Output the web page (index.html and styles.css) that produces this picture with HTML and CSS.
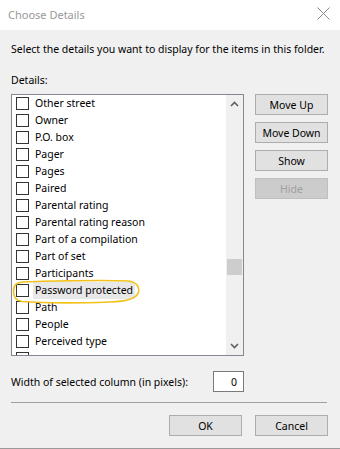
FILE: index.html
```html
<!DOCTYPE html>
<html lang="en">
<head>
  <meta charset="UTF-8" />
  <title>Choose Details</title>
  <link rel="stylesheet" href="styles.css">
</head>
<body>
  <div class="dialog">
    <div class="titlebar">
      <span class="title">Choose Details</span>
      <svg class="close" width="13" height="13" viewBox="0 0 13 13">
        <path d="M0.5 0.5 L12.5 12.5 M12.5 0.5 L0.5 12.5" stroke="#8a8a8a" stroke-width="1" fill="none" />
      </svg>
    </div>

    <div class="content">
      <p class="intro">Select the details you want to display for the items in this folder.</p>
      <div class="label">Details:</div>

      <div class="main">
        <div class="listbox">
          <ul class="items">
            <li><span class="check"></span><span class="name">Other street</span></li>
            <li><span class="check"></span><span class="name">Owner</span></li>
            <li><span class="check"></span><span class="name">P.O. box</span></li>
            <li><span class="check"></span><span class="name">Pager</span></li>
            <li><span class="check"></span><span class="name">Pages</span></li>
            <li><span class="check"></span><span class="name">Paired</span></li>
            <li><span class="check"></span><span class="name">Parental rating</span></li>
            <li><span class="check"></span><span class="name">Parental rating reason</span></li>
            <li><span class="check"></span><span class="name">Part of a compilation</span></li>
            <li><span class="check"></span><span class="name">Part of set</span></li>
            <li><span class="check"></span><span class="name">Participants</span></li>
            <li class="selected"><span class="check"></span><span class="name">Password protected</span></li>
            <li><span class="check"></span><span class="name">Path</span></li>
            <li><span class="check"></span><span class="name">People</span></li>
            <li><span class="check"></span><span class="name">Perceived type</span></li>
            <li><span class="check"></span></li>
          </ul>
          <div class="scrollbar">
            <svg class="arrow" width="9" height="6" viewBox="0 0 9 6">
              <path d="M1 5 L4.5 1.5 L8 5" stroke="#606060" stroke-width="1.6" fill="none" />
            </svg>
            <div class="track">
              <div class="thumb"></div>
            </div>
            <svg class="arrow" width="9" height="6" viewBox="0 0 9 6">
              <path d="M1 1 L4.5 4.5 L8 1" stroke="#606060" stroke-width="1.6" fill="none" />
            </svg>
          </div>
          <!-- yellow marker drawn round one row -->
          <svg class="marker" width="130" height="26" viewBox="0 0 130 26">
            <path d="M22 2.5 C60 1.5 98 1 116 2 C125 3 127.5 8 126.5 13 C125 19 116 22.5 98 23 C70 24 30 24 10 22.5 C3 21.5 1.5 17 1.5 12 C1.5 6 4 3.5 12 3 C20 2.5 40 2 60 1.8"
              stroke="#f2c21b" stroke-width="1.6" fill="none" stroke-linecap="round" />
          </svg>
        </div>

        <div class="actions">
          <button class="btn">Move Up</button>
          <button class="btn">Move Down</button>
          <button class="btn">Show</button>
          <button class="btn" disabled>Hide</button>
        </div>
      </div>

      <div class="width-row">
        <span>Width of selected column (in pixels):</span>
        <input class="width-input" type="text" value="0" />
      </div>

      <hr class="separator" />

      <div class="footer">
        <button class="btn">OK</button>
        <button class="btn">Cancel</button>
      </div>
    </div>
  </div>
</body>
</html>
```

FILE: styles.css
```css
body {
  margin: 0;
  font-family: 'Noto Sans', 'Open Sans', sans-serif;
  font-size: 10.5px;
  color: #000;
  background-color: #f0f0f0;
}

.dialog {
  width: 340px;
  height: 449px;
  box-sizing: border-box;
  border-bottom: 1px solid #9a9a9a;
  background-color: #f0f0f0;
}

.titlebar {
  height: 30px;
  background-color: white;
  display: flex;
  align-items: center;
  justify-content: space-between;
  padding: 0 10px 0 8px;
}

.title {
  color: #999;
  font-size: 11px;
  margin-top: -1px;
}

.close {
  margin-top: -3px;
}

.content {
  padding: 0 11px;
}

.intro {
  margin: 0;
  padding-top: 11px;
  line-height: 16px;
  white-space: nowrap;
}

.label {
  margin-top: 15px;
  line-height: 16px;
}

.main {
  display: flex;
  gap: 11px;
  margin-top: 6px;
}

.listbox {
  position: relative;
  width: 233px;
  height: 262px;
  box-sizing: border-box;
  border: 1px solid #828790;
  background-color: white;
  display: flex;
  overflow: hidden;
}

.items {
  list-style: none;
  margin: 0;
  padding: 0 0 0 4px;
  flex: 1;
}

.items li {
  height: 17px;
  display: flex;
  align-items: center;
}

.check {
  width: 11px;
  height: 11px;
  border: 1px solid #333;
  flex-shrink: 0;
}

.name {
  margin-left: 4px;
  padding: 0 2px;
  line-height: 17px;
}

.selected .name {
  background-color: #e8e8e8;
}

.scrollbar {
  width: 17px;
  background-color: #f0f0f0;
  display: flex;
  flex-direction: column;
  align-items: center;
}

.arrow {
  margin: 6px 0;
}

.track {
  flex: 1;
  width: 100%;
  padding-top: 146px;
}

.thumb {
  width: 15px;
  height: 16px;
  margin-left: 1px;
  background-color: #cdcdcd;
}

.marker {
  position: absolute;
  left: 0;
  top: 184px;
}

.actions {
  display: flex;
  flex-direction: column;
  gap: 7px;
}

.btn {
  width: 73px;
  height: 21px;
  padding: 0;
  font-family: inherit;
  font-size: 10.5px;
  color: #000;
  background-color: #e1e1e1;
  border: 1px solid #adadad;
}

.btn:disabled {
  color: #a0a0a0;
  background-color: #cccccc;
  border-color: #bfbfbf;
}

.width-row {
  display: flex;
  align-items: center;
  justify-content: space-between;
  width: 233px;
  margin-top: 15px;
  white-space: nowrap;
}

.width-input {
  width: 31px;
  height: 21px;
  box-sizing: border-box;
  border: 1px solid #7a7a7a;
  padding: 0 6px 0 0;
  font-family: inherit;
  font-size: 10.5px;
  text-align: right;
}

.separator {
  margin: 10px 0 0 0;
  width: 316px;
  border: none;
  border-top: 1px solid #a0a0a0;
}

.footer {
  display: flex;
  justify-content: flex-end;
  gap: 13px;
  margin-top: 12px;
  padding-right: 1px;
}
```
